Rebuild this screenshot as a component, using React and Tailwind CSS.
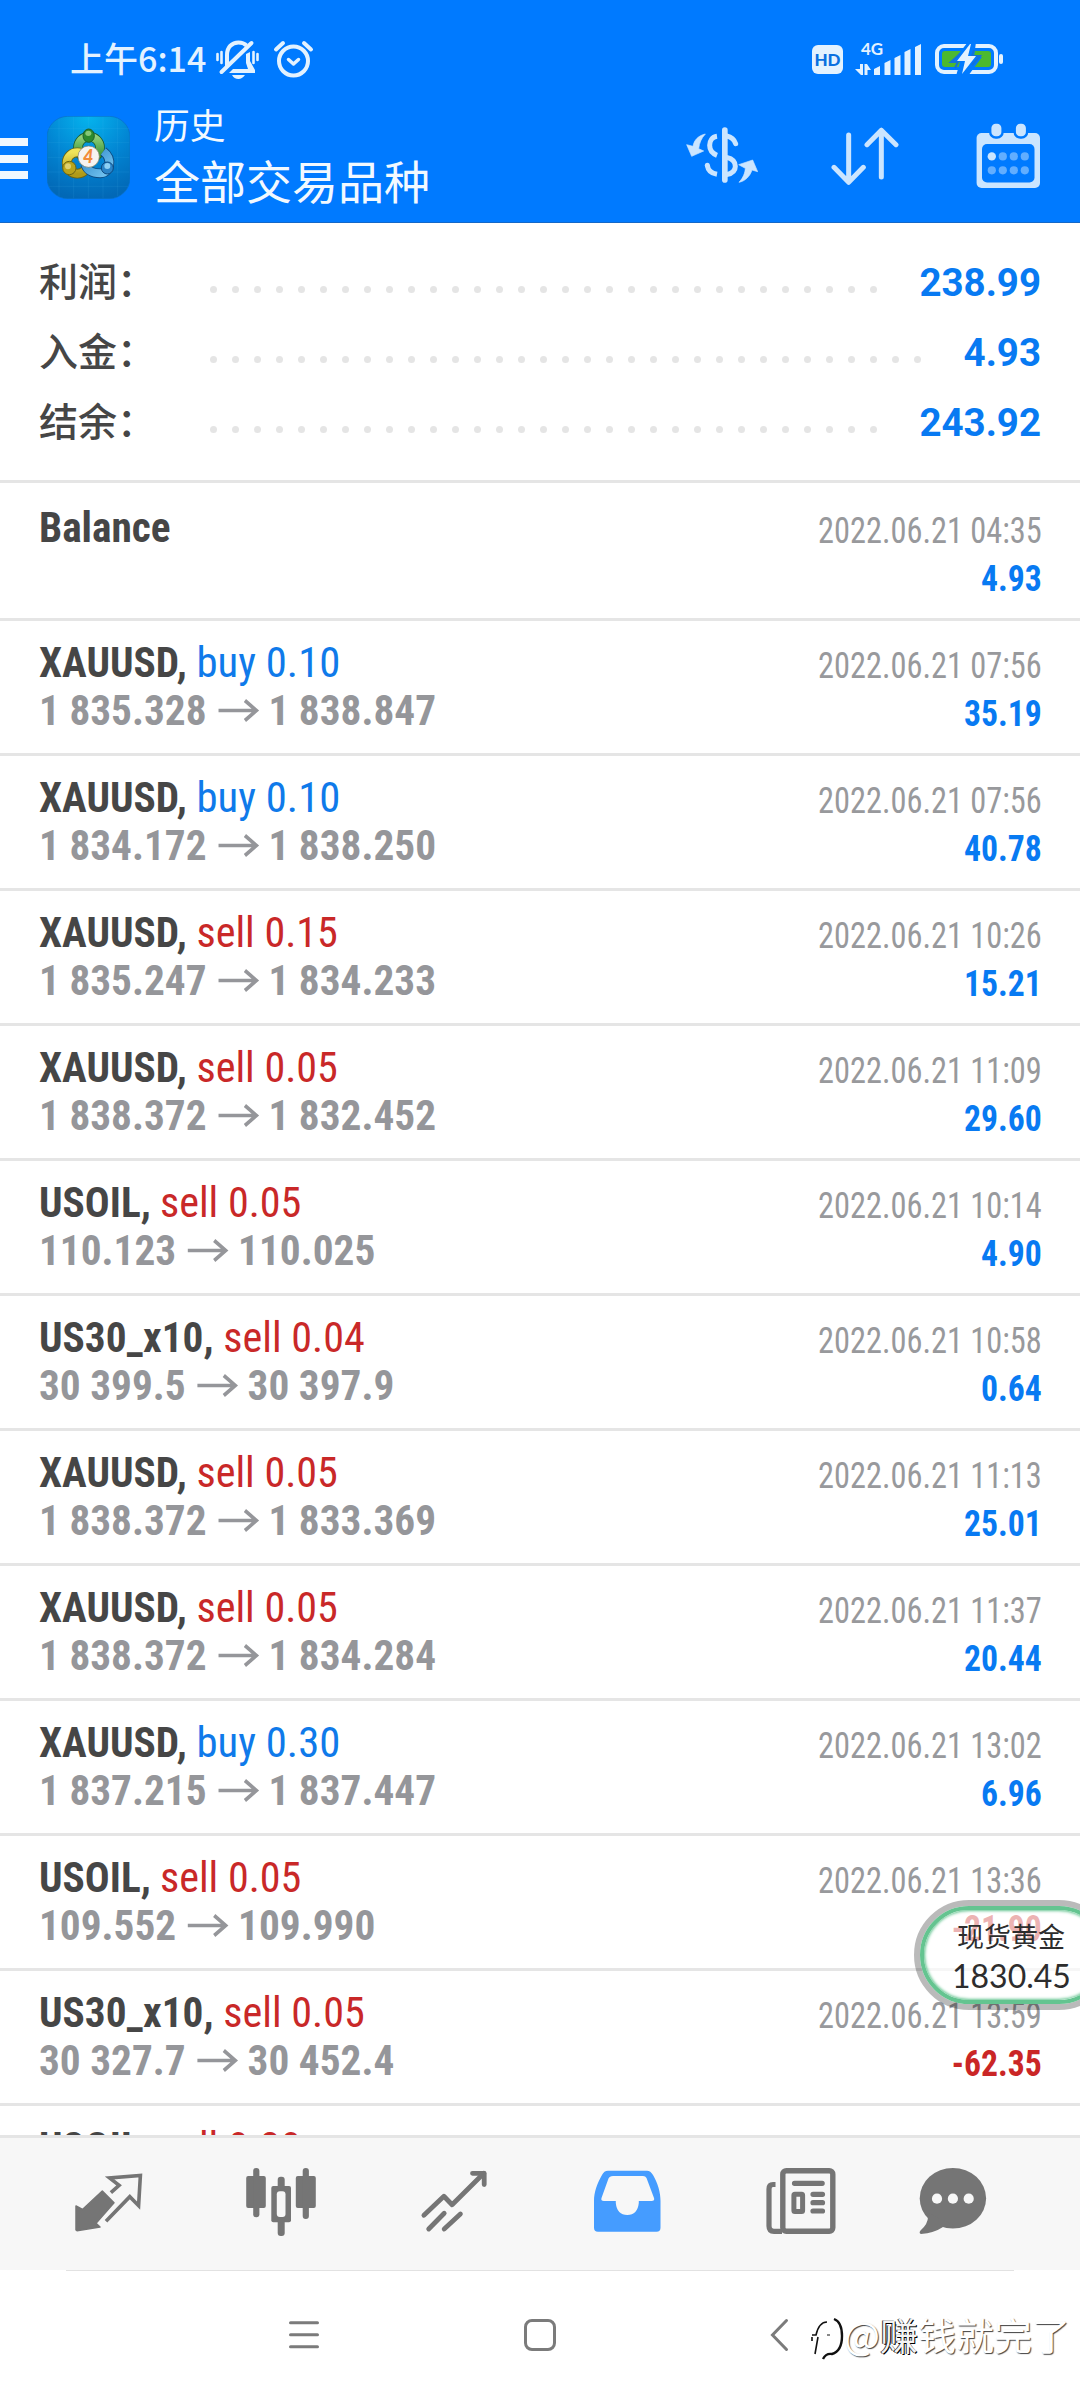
const SUMMARY = [
  { label: "利润：", value: "238.99", dots: 31 },
  { label: "入金：", value: "4.93", dots: 33 },
  { label: "结余：", value: "243.92", dots: 31 },
];

const DEALS = [
  { symbol: "XAUUSD", side: "buy", lots: "0.10", open: "1 835.328", close: "1 838.847", time: "2022.06.21 07:56", profit: "35.19" },
  { symbol: "XAUUSD", side: "buy", lots: "0.10", open: "1 834.172", close: "1 838.250", time: "2022.06.21 07:56", profit: "40.78" },
  { symbol: "XAUUSD", side: "sell", lots: "0.15", open: "1 835.247", close: "1 834.233", time: "2022.06.21 10:26", profit: "15.21" },
  { symbol: "XAUUSD", side: "sell", lots: "0.05", open: "1 838.372", close: "1 832.452", time: "2022.06.21 11:09", profit: "29.60" },
  { symbol: "USOIL", side: "sell", lots: "0.05", open: "110.123", close: "110.025", time: "2022.06.21 10:14", profit: "4.90" },
  { symbol: "US30_x10", side: "sell", lots: "0.04", open: "30 399.5", close: "30 397.9", time: "2022.06.21 10:58", profit: "0.64" },
  { symbol: "XAUUSD", side: "sell", lots: "0.05", open: "1 838.372", close: "1 833.369", time: "2022.06.21 11:13", profit: "25.01" },
  { symbol: "XAUUSD", side: "sell", lots: "0.05", open: "1 838.372", close: "1 834.284", time: "2022.06.21 11:37", profit: "20.44" },
  { symbol: "XAUUSD", side: "buy", lots: "0.30", open: "1 837.215", close: "1 837.447", time: "2022.06.21 13:02", profit: "6.96" },
  { symbol: "USOIL", side: "sell", lots: "0.05", open: "109.552", close: "109.990", time: "2022.06.21 13:36", profit: "-21.90" },
  { symbol: "US30_x10", side: "sell", lots: "0.05", open: "30 327.7", close: "30 452.4", time: "2022.06.21 13:59", profit: "-62.35" },
  { symbol: "USOIL", side: "sell", lots: "0.20", open: "", close: "", time: "", profit: "" },
];

function StatusBar() {
  return (
    <div className="flex h-[96px] items-start pt-[34px] text-[#e3f2ff]">
      <div className="ml-[70px] w-[145px] whitespace-nowrap text-[34px] font-medium leading-[48px]">上午6:14</div>
      <svg className="mt-[6px] h-[40px] w-[46px]" viewBox="0 0 46 40" fill="none" stroke="currentColor">
        <path d="M3.500 15v6M7.500 13v11M39.500 13v11M43.500 15v6" strokeWidth="2.600" strokeLinecap="round" transform="translate(-1 -1)" />
        <path d="M12 26V15C12 7 17 2.500 23.500 2.500C27 2.500 29.500 3.500 31.500 5.500" strokeWidth="4" />
        <path d="M6.500 32L36.500 3" strokeWidth="4" strokeLinecap="round" />
        <path d="M31 14L35 12V21L40 30V33H14L18 29H33L31 23Z" fill="currentColor" stroke="none" />
        <path d="M17 35H30Q27 39 23.500 39Q19 39 17 35Z" fill="currentColor" stroke="none" />
      </svg>
      <svg className="ml-[12px] mt-[6px] h-[40px] w-[42px]" viewBox="0 0 42 40" fill="none" stroke="currentColor" strokeLinecap="round">
        <circle cx="20.500" cy="21" r="14.500" strokeWidth="4" />
        <path d="M3 9.500L10 3M38 9.500L31 3" strokeWidth="4" />
        <path d="M15.500 19.500L20.500 24L25.500 19.500" strokeWidth="3.500" strokeLinejoin="round" />
      </svg>
      <div className="ml-auto mr-[76px] flex">
        <div className="mt-[11px] flex h-[29px] w-[31px] items-center justify-center rounded-[6px] bg-[#e3f2ff] font-['Lato'] text-[17px] font-black leading-none text-[#0a70e0]">HD</div>
        <svg className="ml-[12px] mt-[6px] h-[36px] w-[68px]" viewBox="0 0 68 36" fill="currentColor">
          <text x="6" y="15" className="font-['Lato'] text-[17px] font-bold">4G</text>
          <path d="M5 24H8V35H6L0 29H5ZM9.500 24H12L16 30H12.500V35H9.500Z" />
          <path d="M19 29L25 26V35H19ZM29.500 23L35.500 20V35H29.500ZM39.500 18L45.500 15V35H39.500ZM49.500 12L55.500 9V35H49.500ZM60 7L66 4V35H60Z" />
        </svg>
        <svg className="ml-[11px] mt-[8px] h-[34px] w-[70px]" viewBox="0 0 70 34">
          <rect x="3" y="4" width="59" height="26" rx="7" fill="none" stroke="#e3f2ff" strokeWidth="4" />
          <rect x="8" y="9" width="49" height="16" rx="3" fill="#4cb92f" />
          <rect x="65" y="12" width="4" height="10" rx="2" fill="#e3f2ff" />
          <path d="M34 0L18 20H26L22 34H34L48 15H40L42 0Z" fill="#007aff" />
          <path d="M26 12L17 20H24L21 26M40 8L38 14H46L38 23" fill="none" stroke="#1471d8" strokeWidth="2" />
          <path d="M36 2L23 19H31L28 32L42 14H34L37 2Z" fill="#e3f2ff" />
        </svg>
      </div>
    </div>
  );
}

function AppLogo() {
  return (
    <svg className="h-[83px] w-[83px]" viewBox="50 33 249 247">
      <defs>
        <radialGradient id="tile" cx="0.5" cy="0" r="1">
          <stop offset="0" stopColor="#05b4ee" />
          <stop offset="0.55" stopColor="#0284d2" />
          <stop offset="1" stopColor="#0268b6" />
        </radialGradient>
        <linearGradient id="green" x1="0" y1="0" x2="0" y2="1">
          <stop offset="0" stopColor="#8fd07a" />
          <stop offset="1" stopColor="#2c8a2c" />
        </linearGradient>
        <linearGradient id="yellow" x1="0" y1="0" x2="0" y2="1">
          <stop offset="0" stopColor="#efe45a" />
          <stop offset="1" stopColor="#b09a18" />
        </linearGradient>
        <linearGradient id="blue" x1="0" y1="0" x2="1" y2="1">
          <stop offset="0" stopColor="#2f88c8" />
          <stop offset="1" stopColor="#74c4f0" />
        </linearGradient>
      </defs>
      <rect x="50" y="33" width="249" height="247" rx="62" fill="url(#tile)" stroke="#0a6fc4" strokeWidth="2" />
      <path d="M86 40V272M130 34V279M174 34V279M218 34V279M262 40V272M52 70H297M52 112H297M52 156H297M52 200H297M56 243H293" stroke="#5fc4f5" strokeOpacity="0.16" strokeWidth="2" />
      <circle cx="176" cy="127" r="33" fill="none" stroke="#1c5c2c" strokeWidth="29" />
      <circle cx="176" cy="127" r="33" fill="none" stroke="url(#green)" strokeWidth="24" />
      <circle cx="141" cy="173" r="32" fill="none" stroke="#6a6414" strokeWidth="29" />
      <circle cx="141" cy="173" r="32" fill="none" stroke="url(#yellow)" strokeWidth="24" />
      <path d="M219 138C248 160 240 204 210 204C186 204 170 194 165 178" fill="none" stroke="#0d4a80" strokeWidth="29" />
      <path d="M219 138C248 160 240 204 210 204C186 204 170 194 165 178" fill="none" stroke="url(#blue)" strokeWidth="24" />
      <ellipse cx="175" cy="91" rx="17" ry="20" fill="#2c8a2e" stroke="#1c5c2c" strokeWidth="3" />
      <ellipse cx="174" cy="84" rx="9" ry="8" fill="#86c878" />
      <circle cx="117" cy="188" r="20" fill="#b9a41c" stroke="#6a6414" strokeWidth="3" />
      <circle cx="113" cy="183" r="9" fill="#ddd070" />
      <circle cx="231" cy="188" r="18" fill="#2b84c8" stroke="#0d4a80" strokeWidth="3" />
      <circle cx="231" cy="182" r="9" fill="#8ed0f4" />
      <circle cx="175" cy="154" r="32" fill="#f6f3f0" stroke="#7a7a60" strokeWidth="2" />
      <text x="174" y="174" textAnchor="middle" fill="#f28c3a" className="font-['Lato'] text-[54px] font-black italic">4</text>
    </svg>
  );
}

function Toolbar() {
  return (
    <div className="flex h-[126px] items-start text-[#cbe5ff]">
      <div className="mt-[42px] flex w-[28px] flex-col gap-[8.500px]">
        <div className="h-[8px] bg-[#f0f8ff]" />
        <div className="h-[8px] bg-[#f0f8ff]" />
        <div className="h-[8px] bg-[#f0f8ff]" />
      </div>
      <div className="ml-[19px] mt-[20px]">
        <AppLogo />
      </div>
      <div className="ml-[24px] w-[532px] pt-[4px] text-[#f2f9ff]">
        <div className="text-[35.750px] leading-[48px]">历史</div>
        <div className="text-[46px] leading-[62px]">全部交易品种</div>
      </div>
      <svg className="mt-[31px] h-[56px] w-[72px]" viewBox="48 52 216 168" fill="none" stroke="currentColor">
        <path d="M164.500 61V211" strokeWidth="17" strokeLinecap="round" />
        <path d="M141 80C126 82 119 94 119 107C119 122 128 132 141 137" strokeWidth="15" />
        <path d="M112 167C114 182 124 191 141 194" strokeWidth="15" />
        <circle cx="112" cy="167" r="7.500" fill="currentColor" stroke="none" />
        <path d="M170 79C184 82 193 90 197 102" strokeWidth="15" strokeLinecap="round" />
        <path d="M170 143C188 147 196 156 196 170C196 184 186 192 170 195" strokeWidth="15" />
        <path d="M106 73C84 78 72 92 69 110L50 105L65 140L101 124L86 117C88 100 94 86 106 73Z" fill="currentColor" strokeWidth="2" strokeLinejoin="round" />
        <path d="M207 218C220 204 225 190 226 176L206 165L248 151L263 186L246 181C240 200 226 214 207 218Z" fill="currentColor" strokeWidth="2" strokeLinejoin="round" />
      </svg>
      <svg className="ml-[73px] mt-[31px] h-[58px] w-[68px]" viewBox="484 52 202 174" fill="none" stroke="currentColor" strokeWidth="15" strokeLinecap="round" strokeLinejoin="round">
        <path d="M536 76V215M492 173L536 218L580 173" />
        <path d="M634 202V62M591 105L634 62L678 105" />
      </svg>
      <svg className="ml-[77px] mt-[26px] h-[68px] w-[66px]" viewBox="0 0 66 68" fill="currentColor">
        <rect x="0.600" y="11" width="63.400" height="55" rx="5" />
        <rect x="6" y="22" width="52.500" height="38.500" rx="5" fill="#007aff" />
        <rect x="14.200" y="0.500" width="12.400" height="15" rx="5.500" stroke="#007aff" strokeWidth="2.400" />
        <rect x="38.700" y="0.500" width="12.400" height="15" rx="5.500" stroke="#007aff" strokeWidth="2.400" />
        <circle cx="15.800" cy="34.400" r="4.200" />
        <g fill="#62aeff">
          <circle cx="26.800" cy="34.400" r="4.100" />
          <circle cx="37.800" cy="34.400" r="4.100" />
          <circle cx="48.800" cy="34.400" r="4.100" />
          <circle cx="15.800" cy="48.300" r="4.100" />
          <circle cx="26.800" cy="48.300" r="4.100" />
          <circle cx="37.800" cy="48.300" r="4.100" />
          <circle cx="48.800" cy="48.300" r="4.100" />
        </g>
      </svg>
    </div>
  );
}

function Summary() {
  return (
    <div className="border-b-[3px] border-[#e5e5e5] pb-[22px] pl-[39px] pr-[39px] pt-[25px]">
      {SUMMARY.map((row) => (
        <div key={row.label} className="flex h-[70px] items-center">
          <div className="-mt-[9px] w-[171px] whitespace-nowrap text-[39px] font-medium leading-[64px] text-[#464646]">{row.label}</div>
          <div className="mt-[12px] flex gap-[15px]">
            {Array.from({ length: row.dots }, (_, i) => (
              <div key={i} className="h-[7px] w-[7px] rounded-full bg-[#e5e5e5]" />
            ))}
          </div>
          <div className="ml-auto font-['Roboto'] text-[38.500px] font-bold leading-[70px] text-[#087af2]">{row.value}</div>
        </div>
      ))}
    </div>
  );
}

function Arrow() {
  return (
    <svg className="ml-[11px] mr-[9.500px] h-[23px] w-[44px] shrink-0" viewBox="0 0 43 23" fill="none" stroke="#95969a" strokeWidth="3.600">
      <path d="M0.500 11.500H40M28 1.500L40 11.500L28 21.500" />
    </svg>
  );
}

function DealRow({ deal }) {
  const buy = deal.side === "buy";
  const loss = deal.profit.startsWith("-");
  return (
    <div className="flex h-[135px] shrink-0 justify-between border-b-[3px] border-[#e5e5e5] pl-[39px] pr-[38px] font-['Roboto_Condensed'] leading-[48px]">
      <div className="origin-left scale-x-[0.96] whitespace-pre pt-[17px] text-[43px]">
        <div className="flex">
          <span className="font-bold text-[#464646]">{deal.symbol}, </span>
          <span className={buy ? "origin-left scale-x-[1.035] text-[#0f7aea]" : "origin-left scale-x-[1.02] text-[#c92828]"}>{deal.side} {deal.lots}</span>
        </div>
        {deal.open && (
          <div className="flex items-center font-bold text-[#95969a]">
            {deal.open}
            <Arrow />
            {deal.close}
          </div>
        )}
      </div>
      <div className="pt-[21px] text-right">
        <div className="origin-right scale-x-[0.875] text-[37px] text-[#98999c]">{deal.time}</div>
        <div className={loss ? "origin-right scale-x-[0.935] text-[36px] font-bold text-[#ca2626]" : "origin-right scale-x-[0.935] text-[36px] font-bold text-[#087af2]"}>{deal.profit}</div>
      </div>
    </div>
  );
}

function BottomTabs() {
  return (
    <div className="flex h-[135px] shrink-0 items-start border-t-[3px] border-[#e5e5e5] bg-[#f7f7f7] text-[#757575]">
      <svg className="ml-[70px] mt-[30px] h-[70px] w-[76px]" viewBox="0 0 76 70">
        <path d="M6 38L12.500 41.500L32.300 23L44 34.700L26 55.300L30 59L7 62.700L6 62Z" fill="currentColor" stroke="currentColor" strokeWidth="1.500" strokeLinejoin="round" />
        <path d="M40.900 24.700L49.100 17.300L39.600 10L70.400 7.400L68.600 37.700L59.800 28.700L36 53.300" fill="none" stroke="currentColor" strokeWidth="3.600" />
      </svg>
      <svg className="ml-[96px] mt-[26px] h-[76px] w-[76px]" viewBox="0 0 76 76" fill="currentColor">
        <rect x="4.200" y="12" width="19.600" height="32" rx="2" />
        <rect x="11.200" y="4" width="6.200" height="49.300" rx="3" />
        <rect x="53.800" y="12" width="20" height="32" rx="2" />
        <rect x="60.700" y="4" width="6.200" height="51" rx="3" />
        <rect x="29.300" y="22" width="19.700" height="36.300" rx="2" />
        <rect x="35.700" y="12.700" width="7" height="59.300" rx="3" />
        <rect x="34.800" y="27.300" width="8.700" height="25.700" rx="3" fill="#f7f7f7" />
      </svg>
      <svg className="ml-[100px] mt-[28px] h-[70px] w-[76px]" viewBox="0 0 76 70" fill="none" stroke="currentColor" strokeWidth="4.800" strokeLinecap="round" strokeLinejoin="round">
        <path d="M5.900 49.300L25.900 30.300L34.100 38.700L65.800 7.300" />
        <path d="M54.500 7.300H66.200V18.500" />
        <path d="M10.700 63L26.200 47.300M26.200 63L42.400 48" />
      </svg>
      <svg className="ml-[96px] mt-[28px] h-[70px] w-[76px]" viewBox="0 0 76 70">
        <path d="M18 4.700H57Q60.500 4.700 63 9C68 18 70.500 26 70.500 35V61.700Q70.500 65.700 66.500 65.700H8Q4 65.700 4 61.700V35C4 26 7 18 12 9Q14 4.700 18 4.700Z" fill="#459cff" />
        <path d="M23 10H53Q55.500 10 56.500 12L64 32Q65 35 61.500 35H48.800V37Q47.500 49 37.300 49Q27 49 25.800 37V35H14Q10.500 35 11.500 32L18.500 12.500Q19.500 10 23 10Z" fill="#f7f7f7" />
      </svg>
      <svg className="ml-[96px] mt-[26px] h-[76px] w-[76px]" viewBox="0 0 76 76" fill="none" stroke="currentColor">
        <rect x="20.800" y="6.700" width="50" height="60.600" rx="3.500" strokeWidth="5.400" />
        <path d="M13.500 20.500H11Q7 20.500 7 25V62Q7 67.300 12 67.300H20" strokeWidth="5.200" />
        <path d="M32.500 19.300H60.200M51 30.300H60.500M51 38.700H60.500M51 47H60.500" strokeWidth="5.200" strokeLinecap="round" />
        <rect x="31.900" y="30.200" width="8.700" height="17.300" rx="1" strokeWidth="5" />
      </svg>
      <svg className="ml-[78px] mt-[26px] h-[76px] w-[76px]" viewBox="0 0 76 76" fill="currentColor">
        <ellipse cx="36.900" cy="34.300" rx="33.200" ry="30.300" />
        <path d="M10 48L12 53Q12 60 4.500 66.500Q2.500 69 5 70Q18 69 27 63L40 62Z" />
        <circle cx="21" cy="34.700" r="5.100" fill="#f7f7f7" />
        <circle cx="36.900" cy="34.700" r="5.100" fill="#f7f7f7" />
        <circle cx="52.700" cy="34.700" r="5.100" fill="#f7f7f7" />
      </svg>
    </div>
  );
}

function SystemNav() {
  return (
    <div className="h-[130px] shrink-0 bg-white text-[#7b7b7b]">
      <div className="mx-[66px] h-px bg-[#e2e2e2]" />
      <div className="flex items-start pt-[47px]">
        <svg className="ml-[287px] h-[36px] w-[34px]" viewBox="0 0 34 36" fill="none" stroke="currentColor" strokeWidth="3" strokeLinecap="round">
          <path d="M3.500 4.700H30.500M3.500 16.700H30.500M3.500 28.700H30.500" />
        </svg>
        <svg className="ml-[201px] h-[36px] w-[36px]" viewBox="0 0 36 36" fill="none" stroke="currentColor" strokeWidth="3">
          <rect x="3.500" y="2.500" width="29" height="29" rx="6.500" />
        </svg>
        <svg className="ml-[208px] h-[36px] w-[26px]" viewBox="0 0 26 36" fill="none" stroke="currentColor" strokeWidth="3" strokeLinecap="round">
          <path d="M20.500 2.500L6.500 17L20.500 31.500" />
        </svg>
      </div>
    </div>
  );
}

function PriceBubble() {
  return (
    <div className="absolute left-[914px] top-[1900px] h-[110px] w-[200px] rounded-[55px] border-[6px] border-black/27">
      <div className="h-full w-full rounded-[49px] border-[4.500px] border-[#64c490] bg-white/65 pl-[33px] pt-[8px] text-[#2d2d2d] shadow-[inset_0_0_3px_1px_#64c490]">
        <div className="whitespace-nowrap text-[27px] leading-[35px]">现货黄金</div>
        <div className="-ml-[5px] whitespace-nowrap font-['Lato'] text-[32px] leading-[45px]">1830.45</div>
      </div>
    </div>
  );
}

function Signature() {
  return (
    <div className="absolute left-[810px] top-[2307px] flex items-center whitespace-nowrap text-[38px] leading-[48px] text-white [text-shadow:1px_1px_1px_rgba(0,0,0,0.75)]">
      <svg className="mt-[10px] h-[44px] w-[34px]" viewBox="0 0 34 44" fill="none" stroke="#111111">
        <path d="M2 18H6Q9 5 17 5M8 20L5 37M2 24V20" strokeWidth="1.600" />
        <path d="M24 2Q32 5 32 19Q32 34 22 37Q16 36 13 42" strokeWidth="2.400" />
        <path d="M17 18H20" strokeWidth="1" />
      </svg>
      <span>@</span>
      <span className="text-[#f4f4f4] [text-shadow:1px_1px_0_#000,-1px_0_0_#333]">赚</span>
      <span>钱就完了</span>
    </div>
  );
}

export default function App() {
  return (
    <div className="relative flex h-[2400px] w-[1080px] flex-col overflow-hidden bg-white font-['Noto_Sans_CJK_SC',sans-serif]">
      <header className="h-[223px] shrink-0 border-b border-[#1468c8] bg-[#007aff]">
        <StatusBar />
        <Toolbar />
      </header>
      <Summary />
      <main className="flex min-h-0 flex-1 flex-col overflow-hidden">
        <div className="flex h-[138px] shrink-0 justify-between border-b-[3px] border-[#e5e5e5] pl-[39px] pr-[38px] font-['Roboto_Condensed'] leading-[48px]">
          <div className="origin-left scale-x-[0.96] pt-[20px] text-[43px] font-bold text-[#464646]">Balance</div>
          <div className="pt-[24px] text-right">
            <div className="origin-right scale-x-[0.875] text-[37px] text-[#98999c]">2022.06.21 04:35</div>
            <div className="origin-right scale-x-[0.935] text-[36px] font-bold text-[#087af2]">4.93</div>
          </div>
        </div>
        {DEALS.map((deal, i) => (
          <DealRow key={i} deal={deal} />
        ))}
      </main>
      <BottomTabs />
      <SystemNav />
      <PriceBubble />
      <Signature />
    </div>
  );
}
